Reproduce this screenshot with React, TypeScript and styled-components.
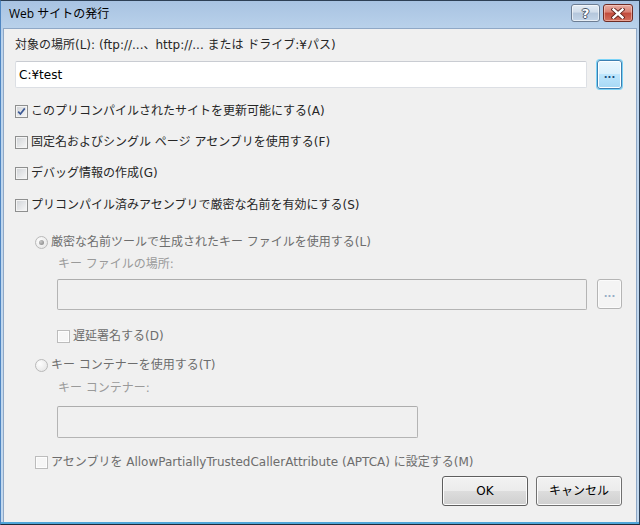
import styled, { createGlobalStyle } from 'styled-components';

const GlobalStyle = createGlobalStyle`
  html, body {
    margin: 0;
    padding: 0;
    background: #f0f0f0;
  }
  body {
    font-family: "DejaVu Sans", "Noto Sans CJK JP", sans-serif;
    font-size: 12px;
    color: #262626;
  }
`;

const CheckMark = () => (
  <svg width="9" height="9" viewBox="0 0 9 9">
    <path d="M1.2 4.6 L3.4 7 L7.8 1.4" fill="none" stroke="#3d5a96" strokeWidth="1.7" />
  </svg>
);

const CloseGlyph = () => (
  <svg width="14" height="11" viewBox="0 0 14 11">
    <path d="M2.5 1.5 L11.5 9.5 M11.5 1.5 L2.5 9.5" stroke="#5a1f18" strokeWidth="4.2" strokeLinecap="square" />
    <path d="M2.5 1.5 L11.5 9.5 M11.5 1.5 L2.5 9.5" stroke="#fff" strokeWidth="2.4" strokeLinecap="square" />
  </svg>
);

type CheckProps = {
  label: string;
  checked?: boolean;
  disabled?: boolean;
  mt: number;
  indent?: number;
};

const Check = ({ label, checked, disabled, mt, indent = 0 }: CheckProps) => (
  <OptionRow $mt={mt} $indent={indent} $disabled={disabled}>
    <Box $disabled={disabled}>{checked && <CheckMark />}</Box>
    <span>{label}</span>
  </OptionRow>
);

type RadioProps = {
  label: string;
  selected?: boolean;
  mt: number;
};

const Radio = ({ label, selected, mt }: RadioProps) => (
  <OptionRow $mt={mt} $indent={20} $disabled>
    <Circle>{selected && <Dot />}</Circle>
    <span>{label}</span>
  </OptionRow>
);

const App = () => {
  return (
    <>
      <GlobalStyle />
      <Window>
        <TitleBar>
          <Title>Web サイトの発行</Title>
          <CaptionButtons>
            <HelpButton>?</HelpButton>
            <CloseButton>
              <CloseGlyph />
            </CloseButton>
          </CaptionButtons>
        </TitleBar>
        <Body>
          <Label $mt={1}>対象の場所(L): (ftp://...、http://... または ドライブ:¥パス)</Label>
          <FieldRow $mt={7} $indent={0}>
            <TextBox $height={27}>C:¥test</TextBox>
            <BrowseButton $focused>...</BrowseButton>
          </FieldRow>

          <Check mt={14} checked label="このプリコンパイルされたサイトを更新可能にする(A)" />
          <Check mt={15} label="固定名およびシングル ページ アセンブリを使用する(F)" />
          <Check mt={15} label="デバッグ情報の作成(G)" />
          <Check mt={16} label="プリコンパイル済みアセンブリで厳密な名前を有効にする(S)" />

          <Radio mt={21} selected label="厳密な名前ツールで生成されたキー ファイルを使用する(L)" />
          <Label $mt={6} $indent={43} $muted>キー ファイルの場所:</Label>
          <FieldRow $mt={7} $indent={42}>
            <TextBox $height={31} $disabled />
            <BrowseButton>...</BrowseButton>
          </FieldRow>
          <Check mt={18} indent={42} disabled label="遅延署名する(D)" />

          <Radio mt={13} label="キー コンテナーを使用する(T)" />
          <Label $mt={7} $indent={43} $muted>キー コンテナー:</Label>
          <FieldRow $mt={10} $indent={42}>
            <TextBox $height={32} $width={361} $disabled />
          </FieldRow>

          <Check mt={16} indent={20} disabled label="アセンブリを AllowPartiallyTrustedCallerAttribute (APTCA) に設定する(M)" />

          <Footer>
            <PushButton $default>OK</PushButton>
            <PushButton>キャンセル</PushButton>
          </Footer>
        </Body>
      </Window>
    </>
  );
};

export default App;

const Window = styled.div`
  width: 640px;
  height: 525px;
  box-sizing: border-box;
  display: flex;
  flex-direction: column;
  border: 1px solid #2d3f55;
  border-left-color: #4f86c2;
  border-bottom-color: #1e2a38;
  background: linear-gradient(#a9c5e4, #bcd4ed 40px, #c2d8ee);
  padding: 0 2px 2px;
  box-shadow: inset 0 -2px 0 #4fa6d9;
`;

const TitleBar = styled.div`
  height: 27px;
  display: flex;
  align-items: center;
  padding: 0 4px 0 6px;
  background: linear-gradient(#a8c3e2, #b9d1ea);
`;

const Title = styled.div`
  flex: 1;
  font-family: "Open Sans", "Noto Sans CJK JP", sans-serif;
  font-size: 12px;
  line-height: 16px;
  color: #000;
  padding-bottom: 1px;
`;

const CaptionButtons = styled.div`
  display: flex;
  gap: 3px;
  align-self: flex-start;
  margin-top: 3px;
`;

const CaptionButton = styled.div`
  height: 18px;
  box-sizing: border-box;
  border-radius: 3px;
  display: flex;
  align-items: center;
  justify-content: center;
`;

const HelpButton = styled(CaptionButton)`
  width: 29px;
  border: 1px solid #6c7d93;
  background: linear-gradient(#e4ecf5 0%, #d0dcea 45%, #b4c6db 50%, #c4d5e8 100%);
  box-shadow: inset 0 0 0 1px rgba(255, 255, 255, 0.6);
  font-family: "DejaVu Sans", sans-serif;
  font-weight: 700;
  font-size: 13px;
  color: #fff;
  text-shadow: 1px 0 0 #4a5568, -1px 0 0 #4a5568, 0 1px 0 #4a5568, 0 -1px 0 #4a5568;
`;

const CloseButton = styled(CaptionButton)`
  width: 30px;
  border: 1px solid #6e2b24;
  background: linear-gradient(#e8ada3 0%, #d98072 45%, #c14a3b 50%, #d3705e 100%);
  box-shadow: inset 0 0 0 1px rgba(255, 220, 210, 0.5);
`;

const Body = styled.div`
  flex: 1;
  display: flex;
  flex-direction: column;
  background: #f0f0f0;
  border: 1px solid #8fa8c6;
  border-bottom: none;
  padding: 7px 14px 0 11px;
`;

const Label = styled.div<{ $mt: number; $indent?: number; $muted?: boolean }>`
  margin-top: ${(p) => p.$mt}px;
  padding-left: ${(p) => p.$indent ?? 0}px;
  height: 16px;
  line-height: 16px;
  white-space: nowrap;
  color: ${(p) => (p.$muted ? '#9a9a9a' : '#262626')};
`;

const FieldRow = styled.div<{ $mt: number; $indent: number }>`
  margin-top: ${(p) => p.$mt}px;
  padding-left: ${(p) => p.$indent}px;
  display: flex;
  align-items: center;
  gap: 10px;
`;

const TextBox = styled.div<{ $height: number; $width?: number; $disabled?: boolean }>`
  height: ${(p) => p.$height}px;
  ${(p) => (p.$width ? `width: ${p.$width}px;` : 'flex: 1;')}
  box-sizing: border-box;
  border: 1px solid ${(p) => (p.$disabled ? '#b4b4b4' : '#dcdfe4')};
  border-top-color: ${(p) => (p.$disabled ? '#adadad' : '#c9ccd2')};
  border-radius: 2px;
  background: ${(p) => (p.$disabled ? '#f0f0f0' : '#fff')};
  padding: 0 3px;
  display: flex;
  align-items: center;
  line-height: 16px;
  color: #000;
`;

const BrowseButton = styled.div<{ $focused?: boolean }>`
  width: 25px;
  height: ${(p) => (p.$focused ? 29 : 30)}px;
  box-sizing: border-box;
  border-radius: 3px;
  display: flex;
  align-items: center;
  justify-content: center;
  font-weight: 700;
  font-size: 10px;
  padding-bottom: 1px;
  border: 1px solid ${(p) => (p.$focused ? '#3c7fb1' : '#b5b5b5')};
  color: ${(p) => (p.$focused ? '#1b4f7d' : '#98aec6')};
  background: ${(p) =>
    p.$focused
      ? 'linear-gradient(#eaf6fd 0%, #d9f0fc 50%, #bee6fd 50%, #a7d9f5 100%)'
      : '#f4f4f4'};
  box-shadow: ${(p) => (p.$focused ? '0 0 0 1px #7bd3f7, inset 0 0 0 1px #fff' : 'inset 0 0 0 1px #fbfbfb')};
  align-self: flex-start;
`;

const OptionRow = styled.div<{ $mt: number; $indent: number; $disabled?: boolean }>`
  margin-top: ${(p) => p.$mt}px;
  padding-left: ${(p) => p.$indent}px;
  height: 16px;
  display: flex;
  align-items: center;
  gap: 3px;
  line-height: 16px;
  white-space: nowrap;
  color: ${(p) => (p.$disabled ? '#6d6d6d' : '#262626')};
`;

const Box = styled.span<{ $disabled?: boolean }>`
  width: 13px;
  height: 13px;
  box-sizing: border-box;
  flex-shrink: 0;
  display: inline-flex;
  align-items: center;
  justify-content: center;
  border: 1px solid ${(p) => (p.$disabled ? '#bcbcbc' : '#8e8f8f')};
  background: ${(p) => (p.$disabled ? '#f6f6f6' : 'linear-gradient(135deg, #cfd2d6, #f8f8f8)')};
  box-shadow: inset 0 0 0 1px ${(p) => (p.$disabled ? '#fdfdfd' : '#f4f4f4')};
`;

const Circle = styled.span`
  width: 13px;
  height: 13px;
  box-sizing: border-box;
  flex-shrink: 0;
  border-radius: 50%;
  border: 1px solid #b9b9b9;
  background: radial-gradient(circle at 35% 35%, #fdfdfd, #e2e2e2);
  display: inline-flex;
  align-items: center;
  justify-content: center;
`;

const Dot = styled.span`
  width: 5px;
  height: 5px;
  border-radius: 50%;
  background: radial-gradient(circle at 35% 35%, #c8c8c8, #7d7d7d);
`;

const Footer = styled.div`
  margin-top: 6px;
  display: flex;
  justify-content: flex-end;
  gap: 8px;
`;

const PushButton = styled.div<{ $default?: boolean }>`
  width: 86px;
  height: 30px;
  box-sizing: border-box;
  border: 1px solid ${(p) => (p.$default ? '#5e5e5e' : '#707070')};
  border-radius: 3px;
  background: linear-gradient(#f2f2f2 0%, #ebebeb 50%, #dddddd 50%, #cfcfcf 100%);
  box-shadow: inset 0 0 0 1px #fcfcfc;
  display: flex;
  align-items: center;
  justify-content: center;
  line-height: 16px;
  color: #000;
`;
